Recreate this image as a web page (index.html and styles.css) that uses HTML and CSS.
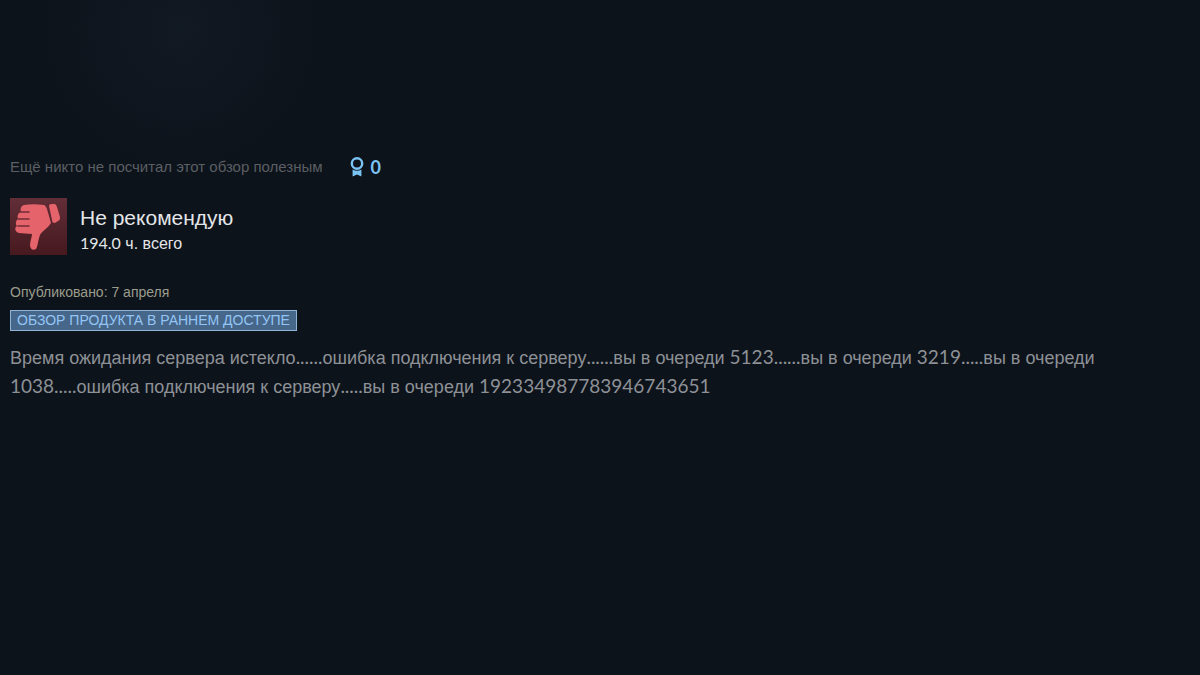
FILE: index.html
```
<!DOCTYPE html>
<html lang="ru">
<head>
  <meta charset="UTF-8">
  <meta name="viewport" content="width=device-width, initial-scale=1.0">
  <title>Обзор</title>
  <link rel="stylesheet" href="styles.css">
</head>
<body>
  <article class="review">
    <div class="header">
      <span>Ещё никто не посчитал этот обзор полезным</span>
      <div class="awards">
        <svg class="award-icon" viewBox="0 0 14 20" aria-hidden="true">
          <circle cx="7" cy="6.5" r="5.2" fill="none" stroke="currentColor" stroke-width="2.4"/>
          <path d="M2.6 12.6 Q7 15 11.4 12.6 V19.5 L7 17.4 L2.6 19.5 Z" fill="currentColor"/>
        </svg>
        <span class="num">0</span>
      </div>
    </div>

    <div class="vote">
      <svg class="thumb" viewBox="0 0 57 57" aria-hidden="true">
        <defs>
          <linearGradient id="thumbBg" x1="0" y1="0" x2="0" y2="1">
            <stop offset="0" stop-color="#622e37"/>
            <stop offset="1" stop-color="#46191f"/>
          </linearGradient>
        </defs>
        <rect width="57" height="57" fill="url(#thumbBg)"/>
        <path d="M14 7 C20 6 27 6 34 7 C36 8 36 9 37 11 L41 25 C38 30 32 33 30 37 C28 42 28 48 26 51 C23 53 20 51 20 47 C20 43 22 39 22 36 L9 35 C5 34 4 30 7 28 C5 26 6 22 8 21 C7 18 8 15 11 14 C10 11 11 8 14 7 Z" fill="#e5636b"/>
        <path d="M39 8 C39 6 41 6 44 6 C46 6 46 7 47 9 L50 19 C50 21 50 22 48 23 L45 25 C43 25 42 24 42 22 Z" fill="#e5636b"/>
        <path d="M10 14 H19 M8 21 H19 M8 28 H19" fill="none" stroke="#702c35" stroke-width="1.6" stroke-linecap="round"/>
      </svg>
      <div>
        <h1 class="title">Не рекомендую</h1>
        <div class="hours"><span class="num">194.0</span> ч. всего</div>
      </div>
    </div>

    <div class="posted">Опубликовано: 7 апреля</div>
    <div class="early-access">ОБЗОР ПРОДУКТА В РАННЕМ ДОСТУПЕ</div>

    <p class="content">Время ожидания сервера истекло<span class="num">......</span>ошибка подключения к серверу<span class="num">......</span>вы в очереди <span class="num">5123......</span>вы в очереди <span class="num">3219.....</span>вы в очереди <span class="num">1038.....</span>ошибка подключения к серверу<span class="num">.....</span>вы в очереди <span class="num">192334987783946743651</span></p>
  </article>
</body>
</html>
```
FILE: styles.css
```
body {
  margin: 0;
  min-height: 100vh;
  background: radial-gradient(circle at 180px 30px, #111923 0, #0d131b 140px);
  font-family: "Liberation Sans", Arial, sans-serif;
}
.num {
  font-family: Lato, sans-serif;
}
.review {
  padding: 156px 80px 40px 10px;
}
.header {
  display: flex;
  align-items: center;
  gap: 27px;
  font-size: 15px;
  line-height: 22px;
  color: #5b5e63;
}
.awards {
  display: flex;
  align-items: center;
  gap: 7px;
  font-size: 18px;
  font-weight: bold;
  color: #7bc3f5;
}
.award-icon {
  width: 14px;
  height: 20px;
}
.vote {
  display: flex;
  align-items: center;
  gap: 13px;
  margin-top: 19px;
}
.thumb {
  width: 57px;
  height: 57px;
}
.title {
  margin: 0;
  padding-top: 8px;
  font-size: 21px;
  font-weight: normal;
  line-height: 26px;
  color: #e4e6e8;
}
.hours {
  font-size: 16px;
  line-height: 24px;
  color: #e4e6e8;
}
.posted {
  margin-top: 26px;
  font-size: 14px;
  line-height: 20px;
  color: #9b9d8c;
}
.early-access {
  width: fit-content;
  margin-top: 8px;
  padding: 0 6px;
  border: 1px solid #8fb4d6;
  background: #47678a;
  font-size: 14px;
  line-height: 19px;
  color: #93c5f5;
}
.content {
  margin: 12px 0 0;
  font-size: 18px;
  line-height: 28px;
  color: #8d9196;
}
.content .num {
  font-size: 19px;
}
```
